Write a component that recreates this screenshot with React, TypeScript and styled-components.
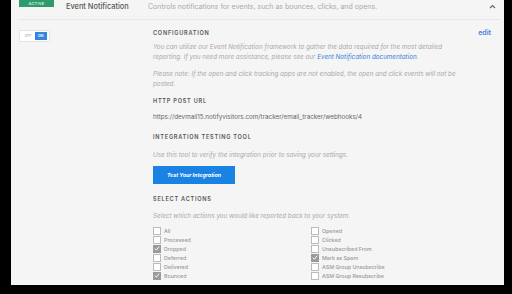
import React from "react";
import styled, {createGlobalStyle} from "styled-components";

const GlobalStyle = createGlobalStyle`
  html, body {
    margin: 0;
    padding: 0;
    background: #000;
  }
  body {
    font-family: Inter, "Open Sans", sans-serif;
    width: 512px;
    height: 294px;
    overflow: hidden;
  }
`

const leftActions = [
    {label: 'All', checked: false},
    {label: 'Processed', checked: false},
    {label: 'Dropped', checked: true},
    {label: 'Deferred', checked: false},
    {label: 'Delivered', checked: false},
    {label: 'Bounced', checked: true},
]

const rightActions = [
    {label: 'Opened', checked: false},
    {label: 'Clicked', checked: false},
    {label: 'Unsubscribed From', checked: false},
    {label: 'Mark as Spam', checked: true},
    {label: 'ASM Group Unsubscribe', checked: false},
    {label: 'ASM Group Resubscribe', checked: false},
]

const ActionList = (props: { items: { label: string, checked: boolean }[] }) => {
    return (
        <Column>
            {props.items.map(el => (
                <ActionRow key={el.label}>
                    <Box checked={el.checked}>
                        {el.checked && (
                            <svg width="7" height="7" viewBox="0 0 8 8">
                                <path d="M1.2 4.2 L3.2 6.2 L6.8 1.6" fill="none" stroke="#fff" strokeWidth="1.3"/>
                            </svg>
                        )}
                    </Box>
                    <span>{el.label}</span>
                </ActionRow>
            ))}
        </Column>
    )
}

export default function App() {
    return (
        <Screen>
            <GlobalStyle/>
            <Panel>
                <Header>
                    <Badge>ACTIVE</Badge>
                    <Title>Event Notification</Title>
                    <Desc>Controls notifications for events, such as bounces, clicks, and opens.</Desc>
                    <Chevron>
                        <svg width="7" height="5" viewBox="0 0 7 5">
                            <path d="M1 4 L3.5 1.5 L6 4" fill="none" stroke="#666" strokeWidth="1.2"/>
                        </svg>
                    </Chevron>
                </Header>
                <Body>
                    <Side>
                        <Toggle>
                            <Off>OFF</Off>
                            <On>ON</On>
                        </Toggle>
                    </Side>
                    <Main>
                        <TopLine>
                            <Heading>CONFIGURATION</Heading>
                            <Edit>edit</Edit>
                        </TopLine>
                        <Note>
                            You can utilize our Event Notification framework to gather the data required for the most detailed
                            reporting. If you need more assistance, please see our <Link>Event Notification documentation</Link>.
                        </Note>
                        <Note $top={7}>
                            Please note: If the open and click tracking apps are not enabled, the open and click events will not be
                            posted.
                        </Note>
                        <Heading $top={8}>HTTP POST URL</Heading>
                        <Url>https://devmail15.notifyvisitors.com/tracker/email_tracker/webhooks/4</Url>
                        <Heading $top={11}>INTEGRATION TESTING TOOL</Heading>
                        <Note $top={9}>Use this tool to verify the integration prior to saving your settings.</Note>
                        <TestBtn>Test Your Integration</TestBtn>
                        <Heading $top={11}>SELECT ACTIONS</Heading>
                        <Note $top={8}>Select which actions you would like reported back to your system.</Note>
                        <Actions>
                            <ActionList items={leftActions}/>
                            <ActionList items={rightActions}/>
                        </Actions>
                    </Main>
                </Body>
            </Panel>
        </Screen>
    )
}

const Screen = styled.div`
  width: 512px;
  height: 294px;
  background: #000;
  padding: 0 8px 9px 11px;
  box-sizing: border-box;
`

const Panel = styled.div`
  width: 493px;
  height: 285px;
  background: #f5f5f5;
  overflow: hidden;
`

const Header = styled.div`
  display: flex;
  align-items: center;
  height: 19px;
  margin: 0 4px 0 8px;
  border-bottom: 1px solid #e6e6e6;
  position: relative;
`

const Badge = styled.div`
  position: absolute;
  left: 0;
  top: 0;
  width: 35px;
  height: 7px;
  background: #2e9a6e;
  color: #cdeedd;
  font-size: 4px;
  line-height: 7px;
  text-align: center;
  font-weight: 600;
  letter-spacing: 0.2px;
`

const Title = styled.div`
  margin-left: 47px;
  width: 82px;
  font-size: 7.4px;
  font-weight: 500;
  color: #555;
  margin-top: -6px;
`

const Desc = styled.div`
  flex: 1;
  font-size: 7px;
  color: #aaa;
  margin-top: -6px;
`

const Chevron = styled.div`
  margin-right: 4px;
  margin-top: -6px;
  display: flex;
`

const Body = styled.div`
  display: flex;
`

const Side = styled.div`
  width: 134px;
  padding: 10px 0 0 8px;
`

const Toggle = styled.div`
  display: flex;
  align-items: center;
  width: 31px;
  height: 12px;
  box-sizing: border-box;
  background: #fff;
  border: 1px solid #e4e4e4;
  border-radius: 1px;
  padding: 0 2px;
  font-size: 3.6px;
  font-weight: 600;
`

const Off = styled.span`
  color: #bbb;
  width: 13px;
  text-align: center;
`

const On = styled.span`
  color: #fff;
  background: #3385e0;
  width: 13px;
  height: 8px;
  line-height: 8px;
  text-align: center;
`

const Main = styled.div`
  flex: 1;
  padding: 8px 13px 0 0;
`

const TopLine = styled.div`
  display: flex;
  justify-content: space-between;
  align-items: center;
`

const Heading = styled.div<{ $top?: number }>`
  margin-top: ${props => props.$top || 0}px;
  font-size: 5.6px;
  font-weight: 600;
  letter-spacing: 0.75px;
  color: #555;
  line-height: 8px;
`

const Edit = styled.div`
  font-size: 7px;
  font-weight: 600;
  color: #3b82d6;
`

const Note = styled.div<{ $top?: number }>`
  margin-top: ${props => props.$top || 5}px;
  font-size: 6.3px;
  font-style: italic;
  color: #aaa;
  line-height: 10px;
  width: 316px;
`

const Link = styled.span`
  color: #3b82d6;
`

const Url = styled.div`
  margin-top: 7px;
  font-size: 6.3px;
  color: #666;
  line-height: 10px;
`

const TestBtn = styled.button`
  display: block;
  margin-top: 6px;
  width: 82px;
  height: 18px;
  border: 0;
  padding: 0;
  background: #1a82e2;
  color: #fff;
  font-family: Inter, "Open Sans", sans-serif;
  font-size: 5.3px;
  font-style: italic;
  font-weight: 700;
`

const Actions = styled.div`
  display: flex;
  margin-top: 5px;
`

const Column = styled.div`
  width: 158px;
`

const ActionRow = styled.div`
  display: flex;
  align-items: center;
  height: 9px;
  font-size: 5.3px;
  font-weight: 500;
  color: #999;
  gap: 3px;
`

const Box = styled.div<{ checked: boolean }>`
  width: 6px;
  height: 6px;
  border: 1px solid ${props => props.checked ? '#9a9a9a' : '#bbb'};
  background: ${props => props.checked ? '#9a9a9a' : '#fff'};
  display: flex;
  align-items: center;
  justify-content: center;
`
